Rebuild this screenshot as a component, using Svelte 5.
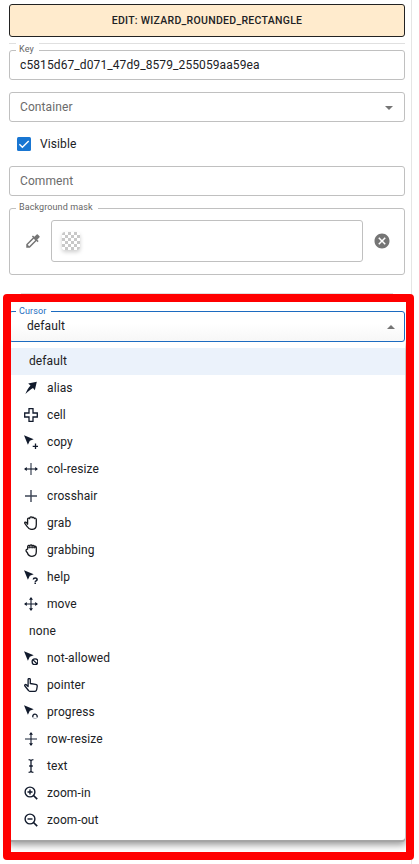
<script>
  const items = ['default', 'alias', 'cell', 'copy', 'col-resize', 'crosshair', 'grab', 'grabbing', 'help', 'move', 'none', 'not-allowed', 'pointer', 'progress', 'row-resize', 'text', 'zoom-in', 'zoom-out'];
  const plain = ['default', 'none'];
  const arrow = ['copy', 'help', 'not-allowed', 'progress'];
</script>

<div class="panel">
  <button class="edit">EDIT: WIZARD_ROUNDED_RECTANGLE</button>
  <div class="rule"></div>
  <div class="field key"><span class="label">Key</span>c5815d67_d071_47d9_8579_255059aa59ea</div>
  <div class="field container muted">Container
    <svg class="caret" width="8" height="4" viewBox="0 0 8 4"><path d="M0 0h8L4 4z" fill="#757575" /></svg>
  </div>
  <div class="visible">
    <svg width="14" height="14" viewBox="0 0 14 14"><rect width="14" height="14" rx="1.5" fill="#1976d2" /><path d="M2.4 7.2l3 3 6.3-6.3" fill="none" stroke="#fff" stroke-width="1.4" /></svg>
    <span>Visible</span>
  </div>
  <div class="field comment muted">Comment</div>
  <div class="mask">
    <span class="label">Background mask</span>
    <svg class="dropper" width="18" height="18" viewBox="0 0 24 24" fill="#757575"><path d="m20.71 5.63-2.34-2.34a.996.996 0 0 0-1.41 0l-3.12 3.12-1.93-1.91-1.41 1.41 1.42 1.42L3 16.25V21h4.75l8.92-8.92 1.42 1.42 1.41-1.41-1.92-1.92 3.12-3.12c.4-.4.4-1.03.01-1.42zM6.92 19 5 17.08l8.06-8.06 1.92 1.92L6.92 19z" /></svg>
    <div class="colour"><div class="swatch"></div></div>
    <svg class="clear" width="18" height="18" viewBox="0 0 24 24" fill="#757575"><path d="M12 2C6.47 2 2 6.47 2 12s4.47 10 10 10 10-4.47 10-10S17.53 2 12 2zm5 13.59L15.59 17 12 13.41 8.41 17 7 15.59 10.59 12 7 8.41 8.41 7 12 10.59 15.59 7 17 8.41 13.41 12 17 15.59z" /></svg>
  </div>
  <div class="section"></div>
  <div class="field cursor"><span class="label">Cursor</span>default
    <svg class="caret" width="8" height="4" viewBox="0 0 8 4"><path d="M0 4h8L4 0z" fill="#757575" /></svg>
  </div>
  <div class="menu">
    {#each items as item}
      <div class="item" class:plain={plain.includes(item)} class:selected={item === 'default'}>
        {#if !plain.includes(item)}
          <svg width="14" height="14" viewBox="0 0 14 14" fill="none" stroke="#111a2c" stroke-width="1.1">
            {#if arrow.includes(item)}<path d="M0 .3l9.7 4-3.9 1.4-1.9 4.1z" fill="#111a2c" stroke="none" />{/if}
            {#if item === 'alias'}
              <path d="M12.8 .8L4.2 2.4l2.3 2C4.1 6.9 2.7 9.4 1.4 13.1 4 10.5 6.3 8.7 9 7l1.8 2.3z" fill="#111a2c" stroke="none" />
            {:else if item === 'cell'}
              <path d="M5 .7h4V5h4.3v4H9v4.3H5V9H.7V5H5z" stroke-width="1.3" />
            {:else if item === 'copy'}
              <path d="M11.5 8.5v5.5M8.7 11.3h5.3" stroke-width="1.3" />
            {:else if item === 'col-resize'}
              <path d="M7 1v12" stroke-width="1.3" stroke="#4a5262" /><path d="M1 7h12" /><path d="M0 7l2.8-2v4zM14 7l-2.8-2v4z" fill="#111a2c" stroke="none" />
            {:else if item === 'row-resize'}
              <path d="M1 7h12" stroke-width="1.3" stroke="#4a5262" /><path d="M7 1v12" /><path d="M7 0L5 2.8h4zM7 14l-2-2.8h4z" fill="#111a2c" stroke="none" />
            {:else if item === 'crosshair'}
              <path d="M7 1v12M1 7h12" stroke-width="1.4" stroke="#3d4555" />
            {:else if item === 'move'}
              <path d="M7 1v12M1 7h12" /><path d="M0 7l2.8-2v4zM14 7l-2.8-2v4zM7 0L5 2.8h4zM7 14l-2-2.8h4z" fill="#111a2c" stroke="none" />
            {:else if item === 'grab'}
              <path d="M3.6 8.2V3c0-1.1 1.7-1.3 2-.3C5.600 .4 8 .3 8.200 1.800c.5-.9 2.100-.6 2.100.8.700-.8 2-.4 2 .8v5c0 3-1.700 5-4.500 5-2.200 0-3.500-.9-4.400-2.600L.8 7.400C.4 6.200 1.600 5.600 2.400 6.500z" stroke="#16191f" stroke-width="1.3" stroke-linejoin="round" />
            {:else if item === 'grabbing'}
              <path d="M3.700 6.100V3.600c0-1.300 1.600-1.700 2.100-.7.300-1.400 2-1.400 2.300-.1.600-.9 2-.5 2.100.6.900-.7 2.100.1 2.100 1.200v4.200c0 2.700-1.500 4.500-4.300 4.500-2.400 0-3.900-1.200-4.500-3.300L2.100 8.200C1.800 6.800 2.400 6.100 3.700 6.100z" stroke="#16191f" stroke-width="1.3" stroke-linejoin="round" /><path d="M3.900 4.300h8.100M5.800 3v2.500M8.100 2.800v2.700M10.200 3.200v2.300" stroke="#16191f" stroke-width=".9" />
            {:else if item === 'help'}
              <path d="M9.300 9.500c.1-2.100 3.900-2 3.800.1-.1 1.300-1.800 1.100-1.900 2.300M11.200 12.600V14" stroke-width="1.5" />
            {:else if item === 'not-allowed'}
              <circle cx="11" cy="10.8" r="2.9" stroke-width="1.3" /><path d="M9 8.900l4 3.800" stroke-width="1.300" />
            {:else if item === 'pointer'}
              <path d="M4.100 8.500V1.600c0-1.400 2.200-1.400 2.200 0v3.900l5.200.8c1.300.2 1.900.9 1.700 2.100l-.5 3.100c-.2 1.200-.8 1.900-2.100 1.900H6.300c-.8 0-1.400-.3-1.800-.9L.9 8c-.7-1 .5-2 1.400-1.300z" stroke-width="1.300" stroke-linejoin="round" />
            {:else if item === 'progress'}
              <path d="M9 12.300a2.200 2.200 0 1 1 3.900.1" stroke-width="1.300" /><path d="M9 12.300a2.200 2.200 0 0 0 3.900.1" stroke="#b5bac2" />
            {:else if item === 'text'}
              <path d="M4.600 .7C6 .7 7 1 7 2c0-1 1-1.300 2.400-1.300M7 2v10M4.600 13.300C6 13.300 7 13 7 12c0 1 1 1.300 2.400 1.300M5.200 7h3.600" stroke-width="1.300" />
            {:else}
              <circle cx="6" cy="6" r="4.900" stroke-width="1.400" /><path d="M9.500 9.500l3.700 3.700" stroke-width="1.700" />
              <path d={item === 'zoom-in' ? 'M3.5 6h5M6 3.5v5' : 'M3.5 6h5'} stroke-width="1.400" />
            {/if}
          </svg>
        {/if}
        <span>{item}</span>
      </div>
    {/each}
  </div>
  <div class="highlight"></div>
</div>

<style>
  :global(body) { background: #fff; }
  .panel { position: relative; box-sizing: border-box; width: 412px; height: 864px; padding: 4px 6px 0 9px; border-right: 1px solid #e5e5e5; font: 12px/16px Roboto, sans-serif; letter-spacing: .1px; color: #202124; }
  .edit { display: block; box-sizing: border-box; width: 396px; height: 33px; padding: 0; border: 1px solid #222; border-radius: 3px; background: #ffebcd; color: #202124; font: 500 10.5px/31px Roboto, sans-serif; letter-spacing: .29px; }
  .rule { height: 1px; margin-top: 6px; background: #e0e0e0; }
  .field { position: relative; box-sizing: border-box; width: 396px; height: 30px; padding: 0 10px; border: 1px solid #c0c0c0; border-radius: 3px; line-height: 28px; }
  .key { margin-top: 6px; }
  .container { margin-top: 12px; }
  .muted { color: #6b6b6b; }
  .caret { position: absolute; right: 11px; top: 13px; }
  .label { position: absolute; top: -8px; left: 6px; padding: 0 5px 0 3px; background: #fff; color: #666; font-size: 9px; line-height: 13px; white-space: nowrap; }
  .visible { display: flex; align-items: center; gap: 9px; height: 44px; padding-left: 8px; }
  .mask { position: relative; display: flex; align-items: center; box-sizing: border-box; width: 396px; height: 67px; margin-top: 12px; padding: 0 13px 2px 14px; border: 1px solid #c0c0c0; border-radius: 3px; }
  .dropper { margin-right: 9px; }
  .colour { box-sizing: border-box; width: 312px; height: 42px; padding: 11px 10px; border: 1px solid #c0c0c0; border-radius: 3px; }
  .swatch { width: 18px; height: 18px; border-radius: 3px; background: conic-gradient(#fff 25%, #c8c8c8 0 50%, #fff 0 75%, #c8c8c8 0) 0 0 / 6px 6px; box-shadow: 0 2px 4px #0003; }
  .clear { margin-left: 10px; }
  .section { height: 17px; margin: 18px 12px 0; border-top: 1px solid #e0e0e0; }
  .cursor { height: 31px; padding-left: 17px; border-color: #1c6bc0; background: linear-gradient(#fff 40%, #f7f7f7); }
  .cursor .label { top: -7px; color: #1c6bc0; }
  .cursor .caret { right: 9px; }
  .menu { box-sizing: border-box; width: 396px; height: 498px; padding-top: 6px; border-radius: 0 0 3px 3px; background: #fff; box-shadow: 0 2px 0 #a5a5a5, 0 4px 7px 1px #0006; }
  .item { display: flex; align-items: center; gap: 9px; box-sizing: border-box; height: 27px; padding: 0 0 2px 15px; }
  .plain { padding-left: 20px; }
  .selected { background: #ebf2fb; }
  .highlight { position: absolute; z-index: 2; box-sizing: border-box; left: 3px; top: 294px; width: 411px; height: 566px; border: 8px solid #f00; border-radius: 4px; }
</style>
